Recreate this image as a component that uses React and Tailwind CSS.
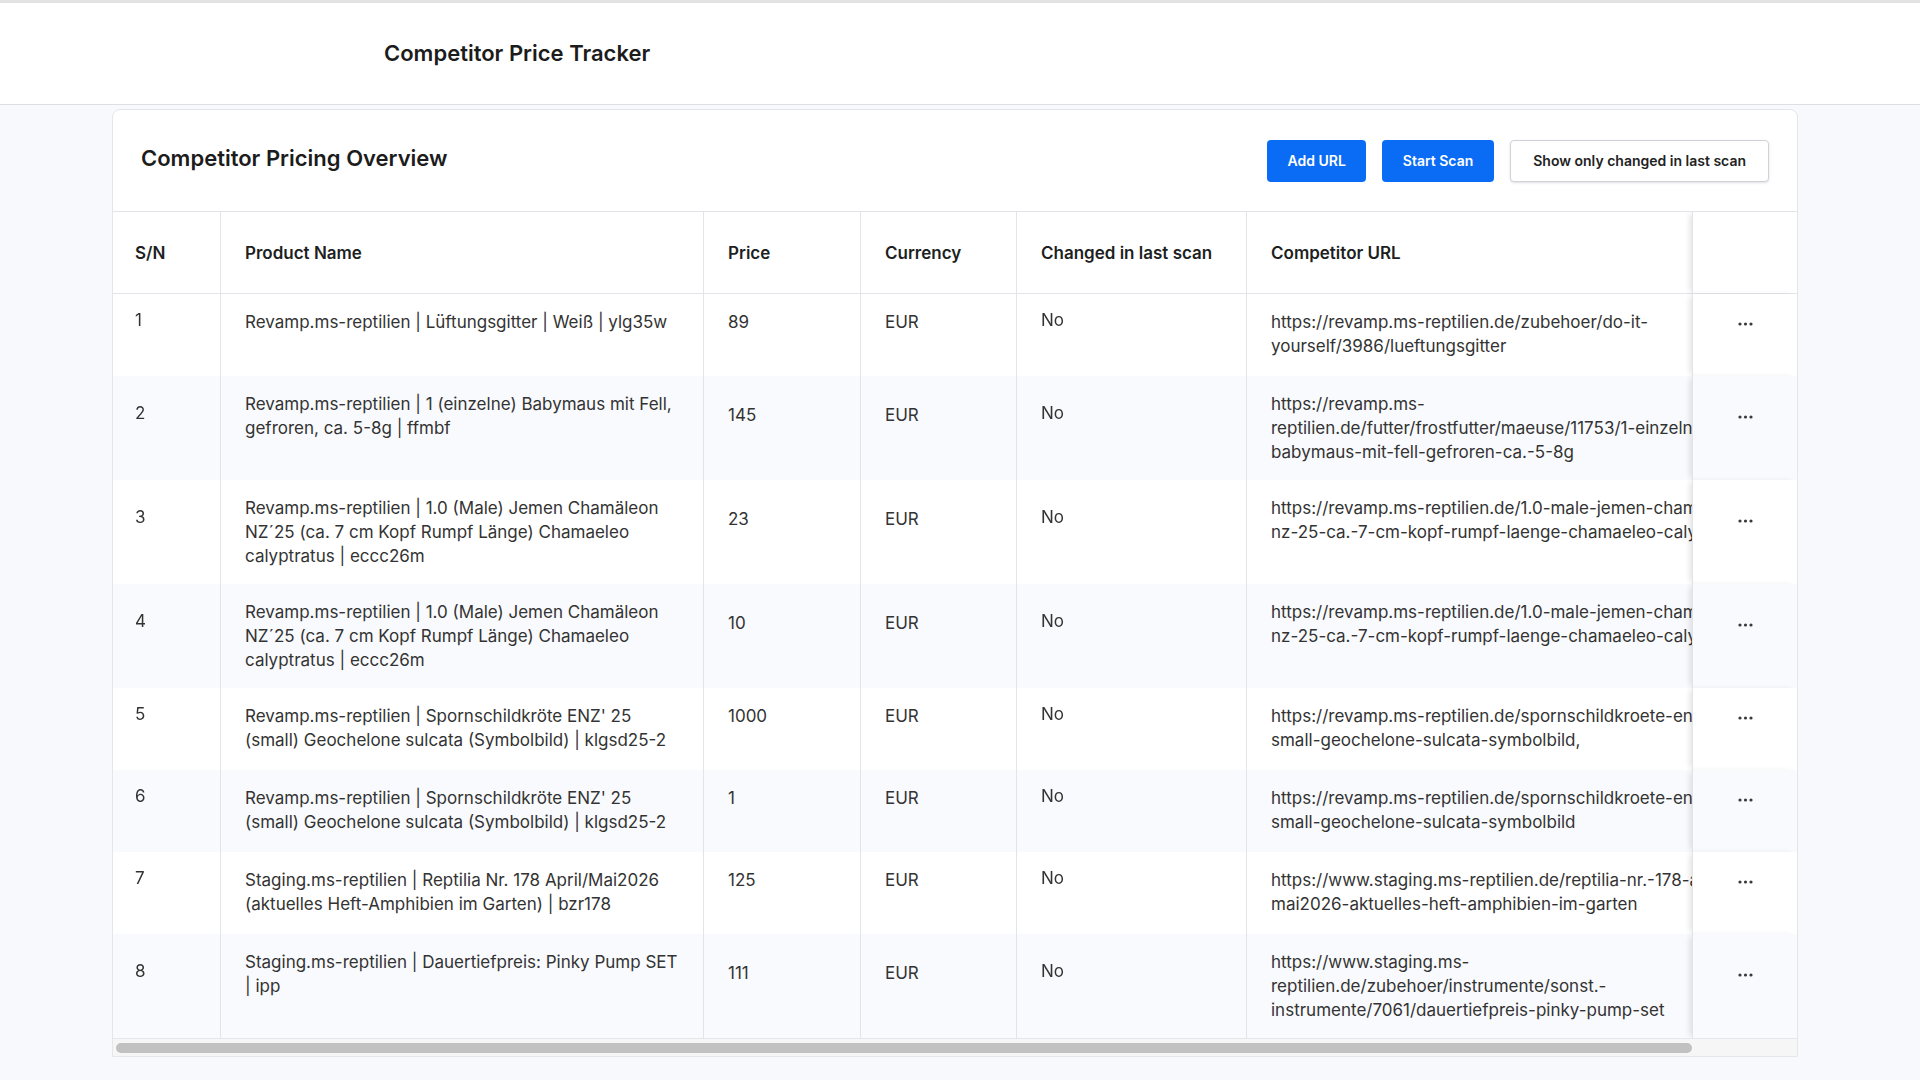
import React from 'react';

const rows = [
  {
    sn: 1,
    name: 'Revamp.ms-reptilien | Lüftungsgitter | Weiß | ylg35w',
    price: '89',
    url: 'https://revamp.ms-reptilien.de/zubehoer/do-it-yourself/3986/lueftungsgitter',
  },
  {
    sn: 2,
    name: 'Revamp.ms-reptilien | 1 (einzelne) Babymaus mit Fell, gefroren, ca. 5-8g | ffmbf',
    price: '145',
    url: 'https://revamp.ms-reptilien.de/futter/frostfutter/maeuse/11753/1-einzelne-babymaus-mit-fell-gefroren-ca.-5-8g',
  },
  {
    sn: 3,
    name: 'Revamp.ms-reptilien | 1.0 (Male) Jemen Chamäleon NZ´25 (ca. 7 cm Kopf Rumpf Länge) Chamaeleo calyptratus | eccc26m',
    price: '23',
    url: 'https://revamp.ms-reptilien.de/1.0-male-jemen-chamaeleon-nz-25-ca.-7-cm-kopf-rumpf-laenge-chamaeleo-calyptratus',
  },
  {
    sn: 4,
    name: 'Revamp.ms-reptilien | 1.0 (Male) Jemen Chamäleon NZ´25 (ca. 7 cm Kopf Rumpf Länge) Chamaeleo calyptratus | eccc26m',
    price: '10',
    url: 'https://revamp.ms-reptilien.de/1.0-male-jemen-chamaeleon-nz-25-ca.-7-cm-kopf-rumpf-laenge-chamaeleo-calyptratus',
  },
  {
    sn: 5,
    name: "Revamp.ms-reptilien | Spornschildkröte ENZ' 25 (small) Geochelone sulcata (Symbolbild) | klgsd25-2",
    price: '1000',
    url: 'https://revamp.ms-reptilien.de/spornschildkroete-enz-25-small-geochelone-sulcata-symbolbild,',
  },
  {
    sn: 6,
    name: "Revamp.ms-reptilien | Spornschildkröte ENZ' 25 (small) Geochelone sulcata (Symbolbild) | klgsd25-2",
    price: '1',
    url: 'https://revamp.ms-reptilien.de/spornschildkroete-enz-25-small-geochelone-sulcata-symbolbild',
  },
  {
    sn: 7,
    name: 'Staging.ms-reptilien | Reptilia Nr. 178 April/Mai2026 (aktuelles Heft-Amphibien im Garten) | bzr178',
    price: '125',
    url: 'https://www.staging.ms-reptilien.de/reptilia-nr.-178-april-mai2026-aktuelles-heft-amphibien-im-garten',
  },
  {
    sn: 8,
    name: 'Staging.ms-reptilien | Dauertiefpreis: Pinky Pump SET | ipp',
    price: '111',
    url: 'https://www.staging.ms-reptilien.de/zubehoer/instrumente/sonst.-instrumente/7061/dauertiefpreis-pinky-pump-set',
  },
];

const Dots = () => (
  <svg width="15" height="4" viewBox="0 0 15 4" fill="#3a3a3a">
    <circle cx="2" cy="2" r="1.6" />
    <circle cx="7.5" cy="2" r="1.6" />
    <circle cx="13" cy="2" r="1.6" />
  </svg>
);

const th = 'h-[82px] align-middle px-6 text-left font-semibold text-[17px] text-[#1d1f23] border-r border-b border-[#e2e4e9]';
const single = 'align-middle pt-4 pb-[42px] px-6 border-r border-[#e2e4e9]';
const multi = 'align-top py-4 px-6 border-r border-[#e2e4e9]';

export default function App() {
  return (
    <div className="min-h-screen bg-[#f8f9fc] font-[Inter,sans-serif] text-[#333]">
      {/* top bar */}
      <div className="bg-white border-t-[3px] border-[#e2e2e2] border-b border-b-[#dedfe3]">
        <div className="h-[101px] flex items-center pl-[384px]">
          <h1 className="text-[22px] font-semibold text-[#1c1c1c]">Competitor Price Tracker</h1>
        </div>
      </div>

      <div className="pl-[112px] pt-[4px]">
        <div className="w-[1686px] bg-white border border-[#e4e6eb] rounded-t-lg overflow-hidden">
          <div className="h-[102px] flex items-center justify-between px-7 border-b border-[#e2e4e9]">
            <h2 className="text-[22px] font-semibold text-[#1c1c1c] -mt-1">Competitor Pricing Overview</h2>
            <div className="flex items-center gap-4">
              <button className="h-[42px] px-5 rounded bg-[#0a6cf5] text-white text-[14px] font-semibold">Add URL</button>
              <button className="h-[42px] px-[21px] rounded bg-[#0a6cf5] text-white text-[14px] font-semibold">Start Scan</button>
              <button className="h-[42px] px-[22px] rounded bg-white border border-[#cfd2d8] text-[#222] text-[14px] font-semibold shadow-sm">
                Show only changed in last scan
              </button>
            </div>
          </div>

          <div className="overflow-hidden">
            <table className="table-fixed border-separate border-spacing-0 w-[1782px] text-[17px] leading-6">
              <colgroup>
                <col className="w-[108px]" />
                <col className="w-[483px]" />
                <col className="w-[157px]" />
                <col className="w-[156px]" />
                <col className="w-[230px]" />
                <col className="w-[543px]" />
                <col className="w-[105px]" />
              </colgroup>
              <thead>
                <tr>
                  <th className={th + ' !px-[22px]'}>S/N</th>
                  <th className={th}>Product Name</th>
                  <th className={th}>Price</th>
                  <th className={th}>Currency</th>
                  <th className={th}>Changed in last scan</th>
                  <th className={th + ' !border-r-0'}>Competitor URL</th>
                  <th className="sticky right-0 bg-white border-b border-l border-[#e2e4e9] shadow-[-4px_0_6px_-2px_rgba(0,0,0,0.12)]"></th>
                </tr>
              </thead>
              <tbody>
                {rows.map((r, i) => {
                  const bg = i % 2 === 1 ? 'bg-[#f9fafd]' : 'bg-white';
                  return (
                    <tr key={r.sn} className={bg}>
                      <td className={single + ' !px-[22px]'}>
                        <span className="relative -top-[2px]">{r.sn}</span>
                      </td>
                      <td className={multi}>{r.name}</td>
                      <td className={single}>{r.price}</td>
                      <td className={single}>EUR</td>
                      <td className={single}>
                        <span className="relative -top-[2px]">No</span>
                      </td>
                      <td className={multi + ' !border-r-0'}>{r.url}</td>
                      <td className={'sticky right-0 align-middle pt-4 pb-[38px] border-l border-[#e2e4e9] shadow-[-4px_0_6px_-2px_rgba(0,0,0,0.12)] ' + bg}>
                        <div className="h-6 flex items-center justify-center">
                          <Dots />
                        </div>
                      </td>
                    </tr>
                  );
                })}
              </tbody>
            </table>
          </div>

          {/* horizontal scrollbar */}
          <div className="h-[18px] bg-[#f6f6f7] border-t border-[#e6e7ea] flex items-center px-[3px]">
            <div className="w-[1576px] h-[10px] rounded-full bg-[#c1c1c1]"></div>
          </div>
        </div>
      </div>
    </div>
  );
}
